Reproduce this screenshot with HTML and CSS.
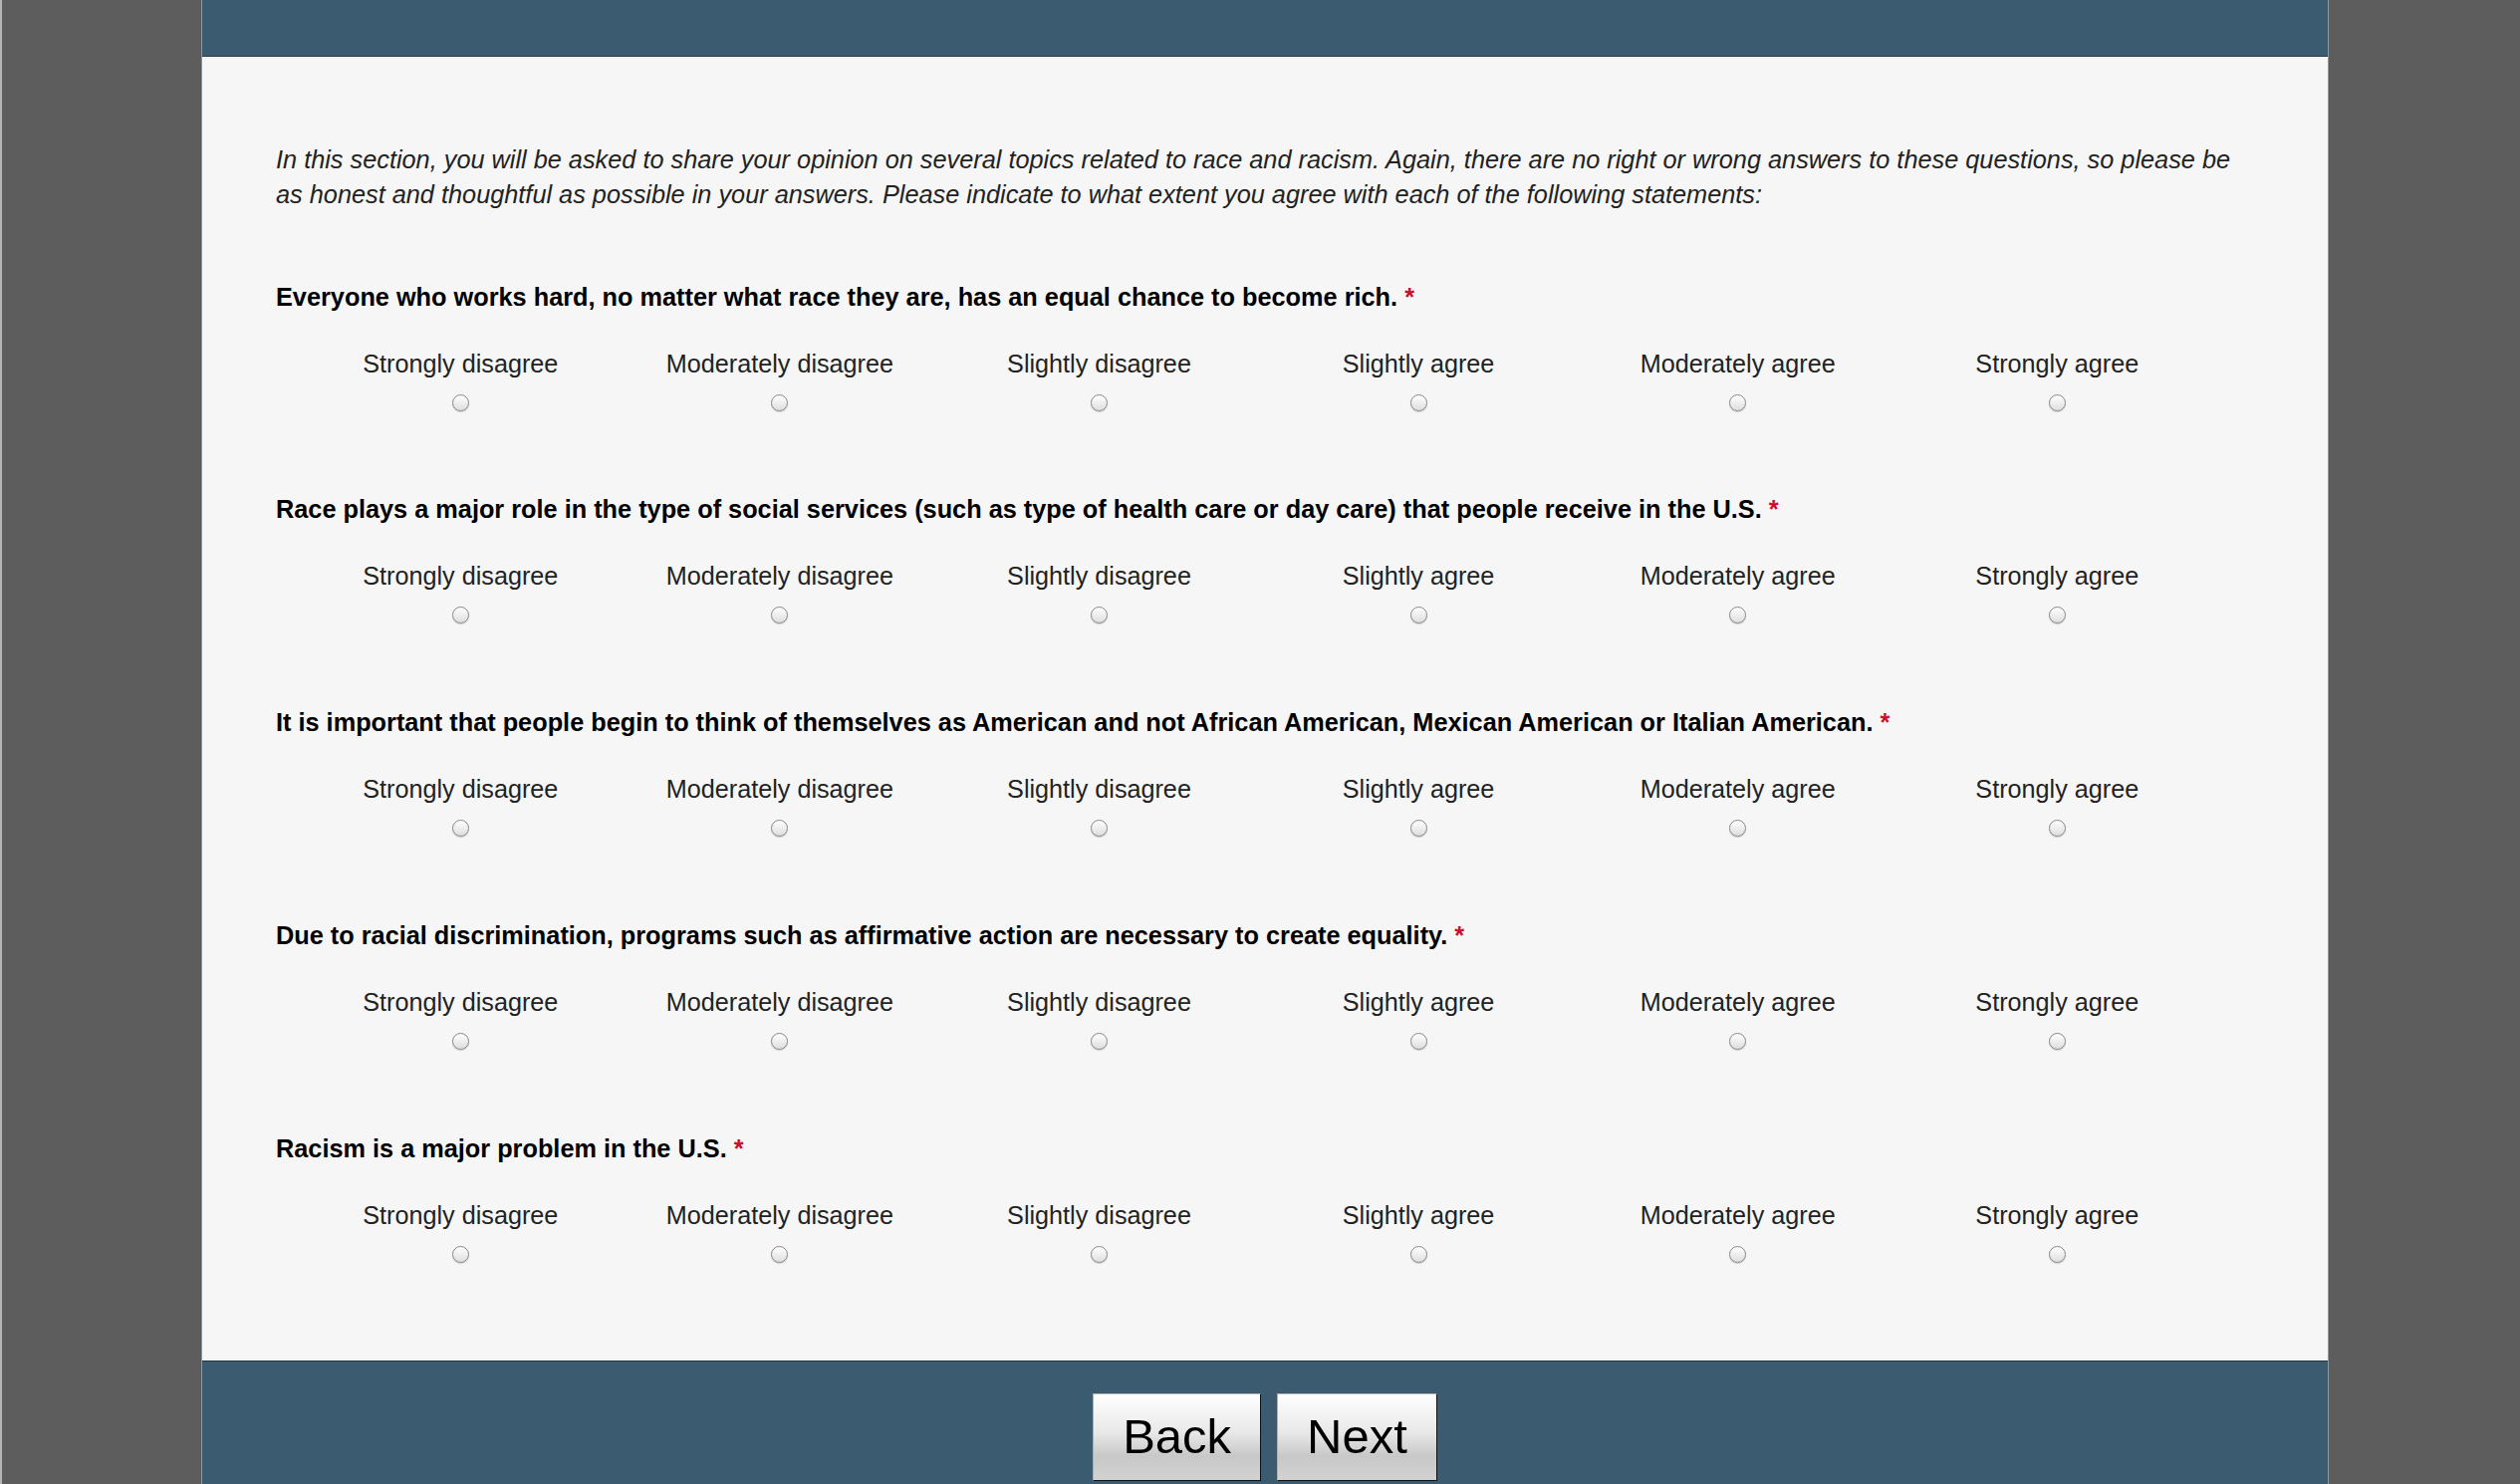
FILE: index.html
```html
<!DOCTYPE html>
<html lang="en">
<head>
<meta charset="utf-8">
<title>Survey</title>
<link rel="stylesheet" href="styles.css">
</head>
<body>
<div class="side side-left"></div>
<div class="page">
  <header class="topbar"></header>
  <main class="content">
    <p class="intro">In this section, you will be asked to share your opinion on several topics related to race and racism. Again, there are no right or wrong answers to these questions, so please be as honest and thoughtful as possible in your answers. Please indicate to what extent you agree with each of the following statements:</p>

    <section class="question">
      <div class="q-title">Everyone who works hard, no matter what race they are, has an equal chance to become rich. <span class="req">*</span></div>
      <div class="scale">
        <label class="opt"><span>Strongly disagree</span><input type="radio" name="q1"></label>
        <label class="opt"><span>Moderately disagree</span><input type="radio" name="q1"></label>
        <label class="opt"><span>Slightly disagree</span><input type="radio" name="q1"></label>
        <label class="opt"><span>Slightly agree</span><input type="radio" name="q1"></label>
        <label class="opt"><span>Moderately agree</span><input type="radio" name="q1"></label>
        <label class="opt"><span>Strongly agree</span><input type="radio" name="q1"></label>
      </div>
    </section>

    <section class="question">
      <div class="q-title">Race plays a major role in the type of social services (such as type of health care or day care) that people receive in the U.S. <span class="req">*</span></div>
      <div class="scale">
        <label class="opt"><span>Strongly disagree</span><input type="radio" name="q2"></label>
        <label class="opt"><span>Moderately disagree</span><input type="radio" name="q2"></label>
        <label class="opt"><span>Slightly disagree</span><input type="radio" name="q2"></label>
        <label class="opt"><span>Slightly agree</span><input type="radio" name="q2"></label>
        <label class="opt"><span>Moderately agree</span><input type="radio" name="q2"></label>
        <label class="opt"><span>Strongly agree</span><input type="radio" name="q2"></label>
      </div>
    </section>

    <section class="question">
      <div class="q-title">It is important that people begin to think of themselves as American and not African American, Mexican American or Italian American. <span class="req">*</span></div>
      <div class="scale">
        <label class="opt"><span>Strongly disagree</span><input type="radio" name="q3"></label>
        <label class="opt"><span>Moderately disagree</span><input type="radio" name="q3"></label>
        <label class="opt"><span>Slightly disagree</span><input type="radio" name="q3"></label>
        <label class="opt"><span>Slightly agree</span><input type="radio" name="q3"></label>
        <label class="opt"><span>Moderately agree</span><input type="radio" name="q3"></label>
        <label class="opt"><span>Strongly agree</span><input type="radio" name="q3"></label>
      </div>
    </section>

    <section class="question">
      <div class="q-title">Due to racial discrimination, programs such as affirmative action are necessary to create equality. <span class="req">*</span></div>
      <div class="scale">
        <label class="opt"><span>Strongly disagree</span><input type="radio" name="q4"></label>
        <label class="opt"><span>Moderately disagree</span><input type="radio" name="q4"></label>
        <label class="opt"><span>Slightly disagree</span><input type="radio" name="q4"></label>
        <label class="opt"><span>Slightly agree</span><input type="radio" name="q4"></label>
        <label class="opt"><span>Moderately agree</span><input type="radio" name="q4"></label>
        <label class="opt"><span>Strongly agree</span><input type="radio" name="q4"></label>
      </div>
    </section>

    <section class="question">
      <div class="q-title">Racism is a major problem in the U.S. <span class="req">*</span></div>
      <div class="scale">
        <label class="opt"><span>Strongly disagree</span><input type="radio" name="q5"></label>
        <label class="opt"><span>Moderately disagree</span><input type="radio" name="q5"></label>
        <label class="opt"><span>Slightly disagree</span><input type="radio" name="q5"></label>
        <label class="opt"><span>Slightly agree</span><input type="radio" name="q5"></label>
        <label class="opt"><span>Moderately agree</span><input type="radio" name="q5"></label>
        <label class="opt"><span>Strongly agree</span><input type="radio" name="q5"></label>
      </div>
    </section>
  </main>
  <footer class="footbar">
    <button class="btn" type="button">Back</button>
    <button class="btn" type="button">Next</button>
  </footer>
</div>
<div class="side side-right"></div>
</body>
</html>
```

FILE: styles.css
```css
html, body {
  margin: 0;
  padding: 0;
  height: 100%;
  overflow: hidden;
}

body {
  display: flex;
  background: #5d5d5d;
  font-family: "Liberation Sans", Arial, Helvetica, sans-serif;
  border-left: 2px solid #b4b4b4;
  box-sizing: border-box;
}

.side-left {
  width: 200px;
  flex: none;
}

.side-right {
  flex: 1;
}

.page {
  width: 2134px;
  flex: none;
  display: flex;
  flex-direction: column;
  border-left: 1px solid #8a98a3;
  border-right: 1px solid #8a98a3;
  height: 1490px;
}

.topbar {
  height: 56px;
  flex: none;
  background: #3a5b70;
  border-bottom: 1px solid #2a3a47;
}

.content {
  background: #f6f6f6;
  height: 1309px;
  flex: none;
  box-sizing: border-box;
  padding: 86px 74px 0 74px;
}

.intro {
  margin: 0;
  font-style: italic;
  font-size: 25.3px;
  line-height: 35px;
  color: #222;
}

.question {
  margin-top: 67.5px;
}

.question + .question {
  margin-top: 81.75px;
}

.q-title {
  font-weight: bold;
  font-size: 25.3px;
  line-height: 35px;
  color: #000;
}

.req {
  color: #c8102e;
}

.scale {
  display: grid;
  grid-template-columns: repeat(6, 320.6px);
  padding-left: 25px;
  margin-top: 34px;
}

.opt {
  display: flex;
  flex-direction: column;
  align-items: center;
  gap: 16px;
  font-size: 25.2px;
  line-height: 30px;
  color: #222;
}

.opt input {
  -webkit-appearance: none;
  appearance: none;
  margin: 0;
  width: 17px;
  height: 17px;
  border-radius: 50%;
  border: 1px solid #888;
  background: linear-gradient(#ffffff, #dedede);
  box-shadow: 0 1px 1px rgba(0,0,0,0.18);
  box-sizing: border-box;
}

.footbar {
  flex: 1;
  background: #3a5b70;
  border-top: 1px solid #26343f;
  display: flex;
  justify-content: center;
  align-items: flex-start;
  gap: 16px;
  padding-top: 32px;
}

.btn {
  font-family: "Liberation Sans", Arial, Helvetica, sans-serif;
  font-size: 49px;
  line-height: 56px;
  color: #000;
  padding: 14px 29px 16px 29px;
  background: linear-gradient(#ffffff 0%, #e8e8e8 45%, #c8c8c8 72%, #d2d2d2 100%);
  border-top: 1px solid #b0b0b0;
  border-left: 1px solid #b0b0b0;
  border-right: 1px solid #111;
  border-bottom: 1px solid #111;
  border-radius: 0;
  margin: 0;
}
```
